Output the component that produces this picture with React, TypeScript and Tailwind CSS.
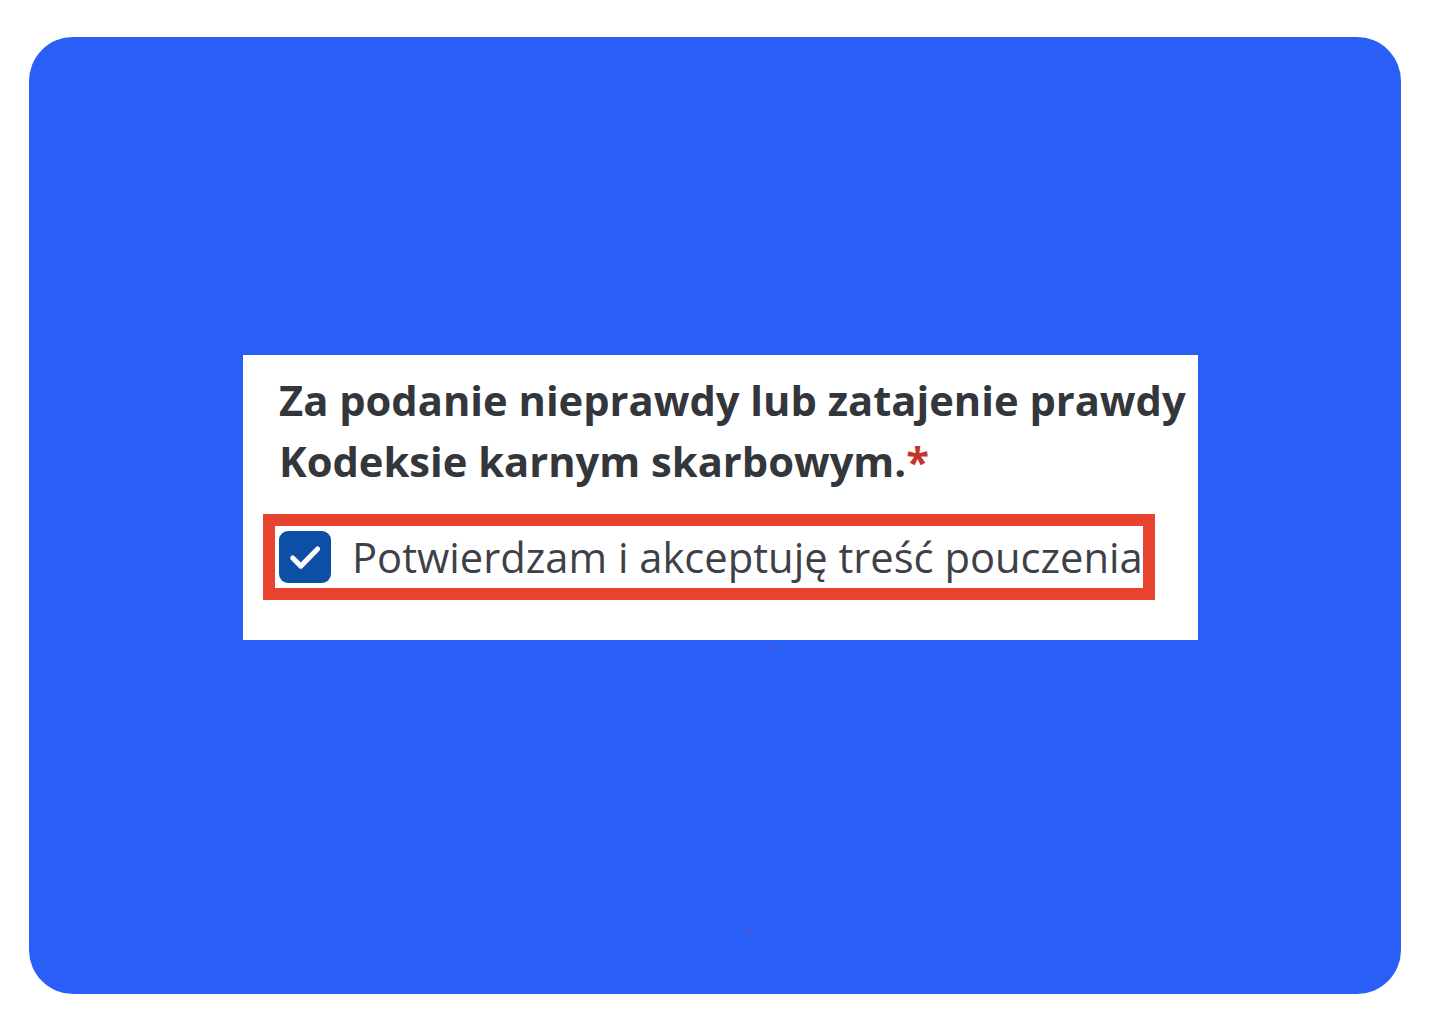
import React from "react";

export default function App() {
  return (
    <div className="w-[1440px] h-[1024px] bg-white pl-[29px] pt-[37px] pr-[39px] pb-[30px]">
      <div className="relative w-full h-full rounded-[44px] bg-[#2a5ff7] pl-[214px] pt-[318px]">
        <div
          className="w-[955px] h-[285px] bg-white overflow-hidden pt-[14px]"
          style={{ fontFamily: '"Open Sans", "Noto Sans", sans-serif' }}
        >
          <div className="pl-[36px] text-[41.7px] leading-[61px] font-bold text-[#33363b] whitespace-nowrap">
            <div>Za podanie nieprawdy lub zatajenie prawdy</div>
            <div>
              Kodeksie karnym skarbowym.<span className="text-[#c3342a]">*</span>
            </div>
          </div>
          <div className="ml-[20px] mt-[23px] w-[892px] h-[86px] border-[12px] border-[#e8432e] flex items-center pl-[4px] overflow-hidden">
            <div className="w-[52px] h-[52px] rounded-[9px] bg-[#0c4fa4] flex items-center justify-center shrink-0">
              <svg width="42" height="42" viewBox="0 0 24 24" fill="none">
                <path d="M5 12.6l4.6 4.6L19.2 7.4" stroke="white" strokeWidth="2.9" strokeLinecap="round" strokeLinejoin="round" />
              </svg>
            </div>
            <span className="ml-[21px] text-[41.7px] leading-none text-[#3d4147] whitespace-nowrap">
              Potwierdzam i akceptuję treść pouczenia
            </span>
          </div>
        </div>
        <div className="absolute left-[743px] top-[609px] w-[3px] h-[3px] rounded-full bg-[#c0304a] opacity-70" />
        <div className="absolute left-[717px] top-[894px] w-[3px] h-[3px] rounded-full bg-[#c0304a] opacity-70" />
      </div>
    </div>
  );
}
